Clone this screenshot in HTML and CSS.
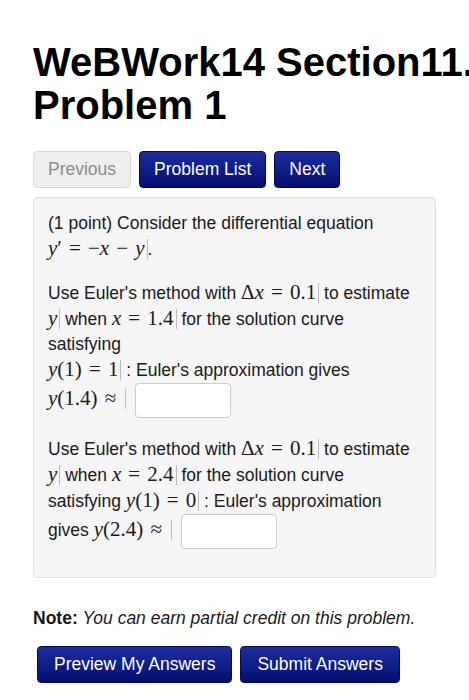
FILE: index.html
```html
<!DOCTYPE html>
<html lang="en">
<head>
    <meta charset="UTF-8">
    <meta name="viewport" content="width=device-width, initial-scale=1.0">
    <title>WeBWork14 Section11.5 Problem 1</title>
    <link rel="stylesheet" href="styles.css">
</head>
<body>
    <div class="page">
        <h1 class="title">WeBWork14 Section11.5<br>Problem 1</h1>

        <div class="nav">
            <button class="btn btn-disabled">Previous</button>
            <button class="btn btn-primary">Problem List</button>
            <button class="btn btn-primary">Next</button>
        </div>

        <div class="problem">
            <p>
                (1 point) Consider the differential equation<br>
                <span class="m"><i>y</i>&prime;<span class="mo">=</span>&minus;<i>x</i><span class="mo">&minus;</span><i>y</i></span><span class="bar"></span>.
            </p>
            <p>
                Use Euler's method with <span class="m">&Delta;<i>x</i><span class="mo">=</span>0.1</span><span class="bar"></span> to estimate<br>
                <span class="m"><i>y</i></span><span class="bar"></span> when <span class="m"><i>x</i><span class="mo">=</span>1.4</span><span class="bar"></span> for the solution curve<br>
                satisfying<br>
                <span class="m"><i>y</i>(1)<span class="mo">=</span>1</span><span class="bar"></span> : Euler's approximation gives<br>
                <span class="m"><i>y</i>(1.4)<span class="mo">&asymp;</span></span><span class="bar"></span> <input class="ans" type="text">
            </p>
            <p>
                Use Euler's method with <span class="m">&Delta;<i>x</i><span class="mo">=</span>0.1</span><span class="bar"></span> to estimate<br>
                <span class="m"><i>y</i></span><span class="bar"></span> when <span class="m"><i>x</i><span class="mo">=</span>2.4</span><span class="bar"></span> for the solution curve<br>
                satisfying <span class="m"><i>y</i>(1)<span class="mo">=</span>0</span><span class="bar"></span> : Euler's approximation<br>
                gives <span class="m"><i>y</i>(2.4)<span class="mo">&asymp;</span></span><span class="bar"></span> <input class="ans" type="text">
            </p>
        </div>

        <p class="note"><b>Note:</b> <i>You can earn partial credit on this problem.</i></p>

        <div class="submit">
            <button class="btn btn-primary btn-wide">Preview My Answers</button>
            <button class="btn btn-primary btn-wide">Submit Answers</button>
        </div>
    </div>
</body>
</html>
```

FILE: styles.css
```css
body {
    margin: 0;
    font-family: "Liberation Sans", Arial, sans-serif;
    font-size: 17.5px;
    line-height: 25px;
    color: #1a1a1a;
    background: #fff;
    overflow-x: hidden;
}
.page {
    padding: 41px 33px 16px;
}
.title {
    margin: 0;
    font-size: 40px;
    line-height: 43px;
    font-weight: bold;
    color: #000;
    white-space: nowrap;
}
.nav {
    display: flex;
    gap: 8px;
    margin-top: 24px;
}
.btn {
    font-family: inherit;
    font-size: 17.5px;
    line-height: 25px;
    padding: 5px 14px;
    border: 1px solid;
    border-radius: 4px;
}
.btn-primary {
    background: linear-gradient(#1c2d9f, #040f6f);
    border-color: #03095c;
    color: #fff;
}
.btn-disabled {
    background: #eee;
    border-color: #d9d9d9;
    color: #8c8c8c;
}
.btn-wide {
    padding: 5px 16px;
}
.problem {
    margin-top: 9px;
    background: #f5f5f5;
    border: 1px solid #e3e3e3;
    border-radius: 4px;
    padding: 13px 14px 10px;
    box-shadow: inset 0 1px 1px rgba(0, 0, 0, 0.05);
}
.problem p {
    margin: 0 0 18px;
    white-space: nowrap;
}
.m {
    font-family: "Liberation Serif", "Times New Roman", serif;
    font-size: 21px;
}
.mo {
    margin: 0 0.34em;
}
.bar {
    display: inline-block;
    width: 1px;
    height: 20px;
    margin-left: 2px;
    background: #bbb;
    vertical-align: -4px;
}
.ans {
    width: 96px;
    height: 35px;
    box-sizing: border-box;
    margin-left: 4px;
    border: 1px solid #ccc;
    border-radius: 4px;
    background: #fff;
    vertical-align: middle;
}
.note {
    margin: 28px 0 0;
}
.submit {
    display: flex;
    gap: 8px;
    margin-top: 15px;
    padding-left: 4px;
}
```
